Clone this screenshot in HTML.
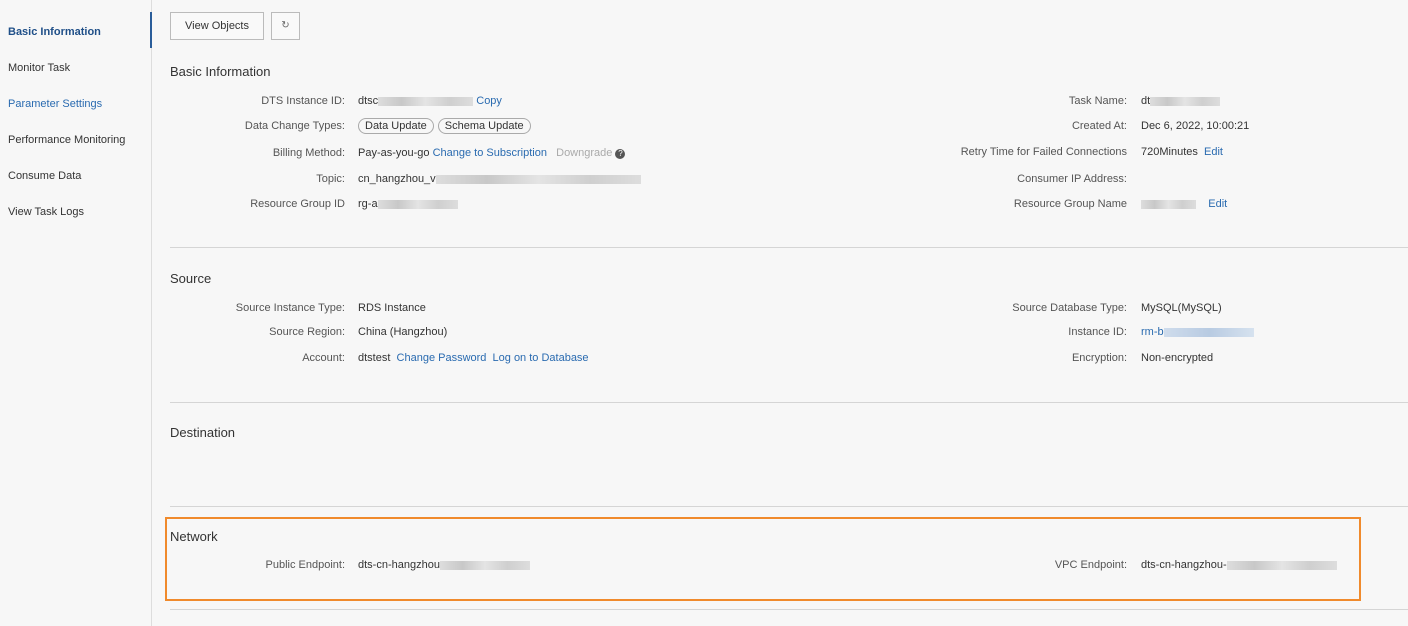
<!DOCTYPE html><html><head><style>
body{margin:0;width:1408px;height:626px;background:#f7f7f7;font-family:"Liberation Sans",sans-serif;font-size:11px;color:#333;position:relative;overflow:hidden}
.a{position:absolute;white-space:nowrap}
.nav{left:8px}
.lbl{text-align:right;color:#555}
.l1{right:1063px}.l2{right:281px}
.v1{left:358px}.v2{left:1141px}
.blue{color:#2a6bb0}
.hr{position:absolute;left:170px;right:0;height:1px;background:#d5d5d5}
.h{left:170px;font-size:13px;color:#333}
.blur{display:inline-block;height:9px;background:linear-gradient(90deg,#ddd,#c8c8c8,#e4e4e4,#cfcfcf,#ddd);vertical-align:middle}
.tag{display:inline-block;border:1px solid #aaa;border-radius:9px;padding:1px 6px;margin-right:4px}
</style></head><body>
<div style="position:absolute;left:151px;top:0;width:1px;height:626px;background:#ddd"></div>
<div style="position:absolute;left:150px;top:12px;width:2px;height:36px;background:#2a5d9a"></div>
<div class="a nav" style="top:26px;color:#1f4f88;font-weight:bold">Basic Information</div>
<div class="a nav" style="top:62px">Monitor Task</div>
<div class="a nav" style="top:98px;color:#2a6bb0">Parameter Settings</div>
<div class="a nav" style="top:134px">Performance Monitoring</div>
<div class="a nav" style="top:170px">Consume Data</div>
<div class="a nav" style="top:206px">View Task Logs</div>
<div class="a" style="left:170px;top:12px;width:92px;height:26px;border:1px solid #bbb;background:#f9f9f9;text-align:center;line-height:26px">View Objects</div>
<div class="a" style="left:271px;top:12px;width:27px;height:26px;border:1px solid #bbb;background:#f9f9f9;text-align:center;line-height:26px;font-size:10px;color:#666">↻</div>
<div class="a h" style="top:64px">Basic Information</div>
<div class="a lbl l1" style="top:95px">DTS Instance ID:</div><div class="a v1" style="top:95px">dtsc<span class="blur" style="width:95px"></span> <span class="blue">Copy</span></div>
<div class="a lbl l1" style="top:120px">Data Change Types:</div><div class="a v1" style="top:118px"><span class="tag">Data Update</span><span class="tag">Schema Update</span></div>
<div class="a lbl l1" style="top:147px">Billing Method:</div><div class="a v1" style="top:147px">Pay-as-you-go <span class="blue">Change to Subscription</span> &nbsp; <span style="color:#aaa">Downgrade</span> <span style="display:inline-block;width:10px;height:10px;border-radius:5px;background:#555;color:#fff;font-size:8px;text-align:center;line-height:10px">?</span></div>
<div class="a lbl l1" style="top:173px">Topic:</div><div class="a v1" style="top:173px">cn_hangzhou_v<span class="blur" style="width:205px"></span></div>
<div class="a lbl l1" style="top:198px">Resource Group ID</div><div class="a v1" style="top:198px">rg-a<span class="blur" style="width:80px"></span></div>
<div class="a lbl l2" style="top:95px">Task Name:</div><div class="a v2" style="top:95px">dt<span class="blur" style="width:70px"></span></div>
<div class="a lbl l2" style="top:120px">Created At:</div><div class="a v2" style="top:120px">Dec 6, 2022, 10:00:21</div>
<div class="a lbl l2" style="top:146px">Retry Time for Failed Connections</div><div class="a v2" style="top:146px">720Minutes &nbsp;<span class="blue">Edit</span></div>
<div class="a lbl l2" style="top:173px">Consumer IP Address:</div>
<div class="a lbl l2" style="top:198px">Resource Group Name</div><div class="a v2" style="top:198px"><span class="blur" style="width:55px"></span> &nbsp;&nbsp;&nbsp;<span class="blue">Edit</span></div>
<div class="hr" style="top:247px"></div>
<div class="a h" style="top:271px">Source</div>
<div class="a lbl l1" style="top:302px">Source Instance Type:</div><div class="a v1" style="top:302px">RDS Instance</div>
<div class="a lbl l1" style="top:326px">Source Region:</div><div class="a v1" style="top:326px">China (Hangzhou)</div>
<div class="a lbl l1" style="top:352px">Account:</div><div class="a v1" style="top:352px">dtstest &nbsp;<span class="blue">Change Password &nbsp;Log on to Database</span></div>
<div class="a lbl l2" style="top:302px">Source Database Type:</div><div class="a v2" style="top:302px">MySQL(MySQL)</div>
<div class="a lbl l2" style="top:326px">Instance ID:</div><div class="a v2 blue" style="top:326px">rm-b<span class="blur" style="width:90px;background:linear-gradient(90deg,#cfdcec,#b8cbe2,#d6e2ef)"></span></div>
<div class="a lbl l2" style="top:352px">Encryption:</div><div class="a v2" style="top:352px">Non-encrypted</div>
<div class="hr" style="top:402px"></div>
<div class="a h" style="top:425px">Destination</div>
<div class="hr" style="top:506px"></div>
<div class="a h" style="top:529px">Network</div>
<div class="a lbl l1" style="top:559px">Public Endpoint:</div><div class="a v1" style="top:559px">dts-cn-hangzhou<span class="blur" style="width:90px"></span></div>
<div class="a lbl l2" style="top:559px">VPC Endpoint:</div><div class="a v2" style="top:559px">dts-cn-hangzhou-<span class="blur" style="width:110px"></span></div>
<div class="hr" style="top:609px"></div>
<div style="position:absolute;left:165px;top:517px;width:1192px;height:80px;border:2px solid #f08a2c"></div>
</body></html>
